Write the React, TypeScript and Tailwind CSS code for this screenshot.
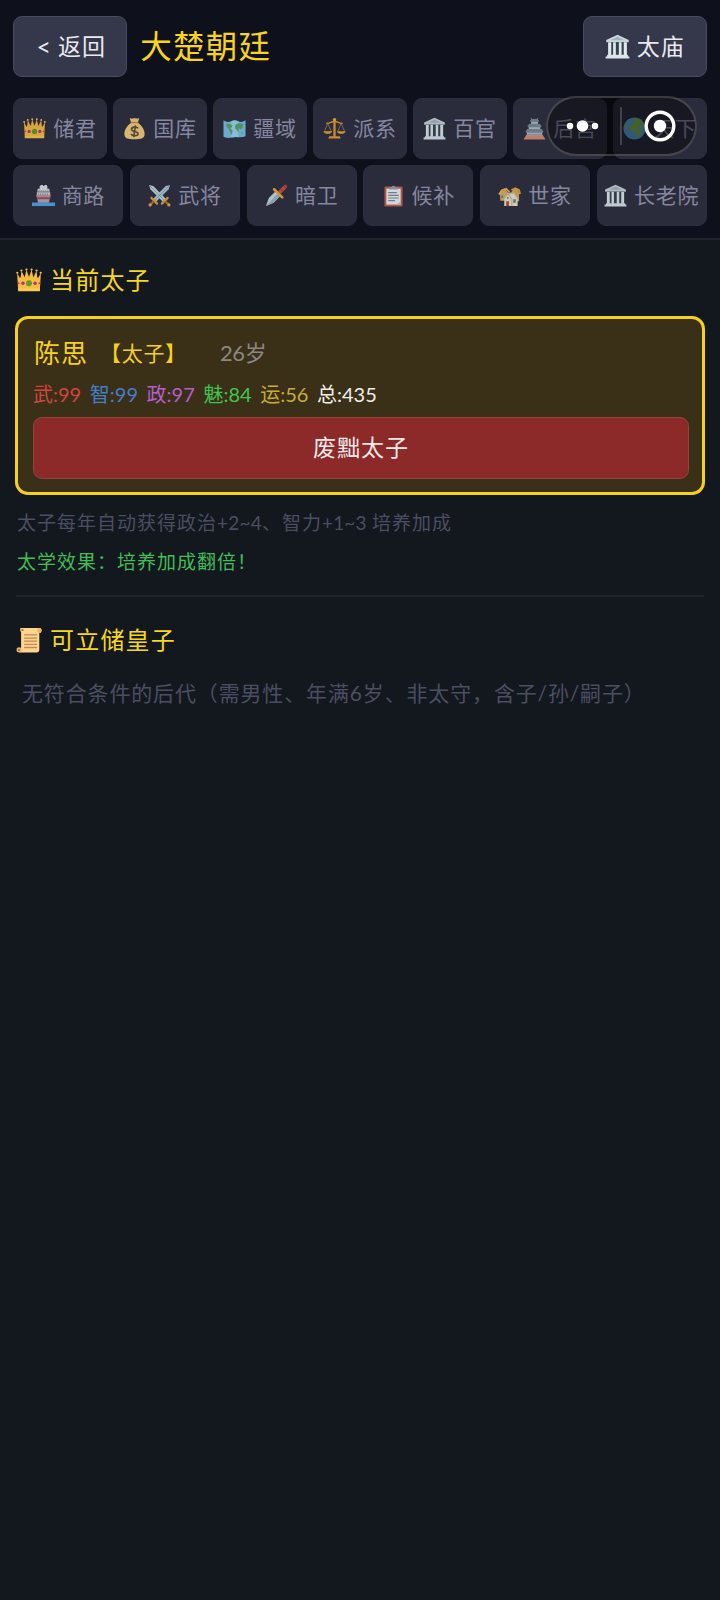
import type { ReactNode } from 'react';

type IconName =
    | 'crown' | 'money' | 'map' | 'scales' | 'temple' | 'castle' | 'globe'
    | 'ship' | 'swords' | 'dagger' | 'clipboard' | 'houses' | 'scroll';

const drawings: Record<IconName, ReactNode> = {
    crown: (
        <>
            <path d="M1 5.5 4.2 11 5 3.5 8 9.5 9.6 2.5 12 9 14.4 2.5 16 9.5 19 3.5 19.8 11 23 5.5 22 22H2Z" fill="#f8b83a" />
            <path d="M2 11.5 5 9l3 2.5L12 9l4 2.5L19 9l3 2.5V22H2Z" fill="#f8bc40" />
            <path d="M1.9 19.5h20.2L22 22.3H2Z" fill="#fbcb4d" />
            <g fill="#f9c84a">
                <circle cx="1.2" cy="5.3" r="1" />
                <circle cx="5" cy="3.2" r="1" />
                <circle cx="9.6" cy="2.3" r="1" />
                <circle cx="14.4" cy="2.3" r="1" />
                <circle cx="19" cy="3.2" r="1" />
                <circle cx="22.8" cy="5.3" r="1" />
            </g>
            <circle cx="12" cy="15" r="2.7" fill="#5f9a2d" />
            <circle cx="6.4" cy="15" r="1.6" fill="#b12f91" />
            <circle cx="17.6" cy="15" r="1.6" fill="#b12f91" />
            <circle cx="2.4" cy="15" r="1" fill="#d8473c" />
            <circle cx="21.6" cy="15" r="1" fill="#d8473c" />
        </>
    ),
    money: (
        <>
            <path d="M8.5 6C4 9 1 14 1.5 18.5c.4 3.9 3.6 4.7 10.5 4.7s10.100-.8 10.500-4.700C23 14 20 9 15.500 6Z" fill="#f6cf7c" />
            <path d="M7 1q2.500 1.200 5 0 2.500 1.200 5 0L15.500 6h-7Z" fill="#f6cf7c" />
            <path d="M8 5.800h8" stroke="#b98a3c" strokeWidth="1.300" />
            <path d="M15.800 11.800c-1-1.800-6.800-1.900-7 .9-.2 3.200 7 1.700 6.900 4.800-.1 2.800-6 2.700-7.400.2M13 8.800 11.200 21" stroke="#5d4b35" strokeWidth="1.700" fill="none" />
        </>
    ),
    map: (
        <>
            <path d="M.5 3.500Q4.500 6.500 8.500 4.500T16 4.500t7.500-1V20q-3.500 1.500-7.500 1t-7.500.5T.5 20.500Z" fill="#79c1ec" />
            <path d="M8.500 4.500Q12 3 16 4.500V21q-4-.5-7.500.5Z" fill="#9ad6f4" />
            <path d="M3 7.500 6.500 7 10 8.500 8.500 11.500 7.500 12l2.500 2-.8 5-1.700-3L6 12.500 4 10.500Z" fill="#5aa661" />
            <path d="M13 8 16 6.500 21.500 7 20.500 11.500 18.500 13 16.500 11.500 16 16l-2-2.500-1.500-2Z" fill="#5aa661" />
            <path d="M18.500 16.500 21 15.500V18Z" fill="#6db65e" />
        </>
    ),
    scales: (
        <>
            <path d="M10.800 3h2.400v17h-2.400zM6.500 20h11l1 2.500h-13z" fill="#e69d27" />
            <circle cx="12" cy="2.700" r="1.700" fill="#f0b23a" />
            <path d="M3.500 6.500C7 7.500 9 4 12 4.800 15 4 17 7.500 20.500 6.500" stroke="#e69d27" strokeWidth="1.600" fill="none" />
            <path d="M5 6.500 1.500 15M5 6.500 8.500 15M19 6.500 15.500 15M19 6.500 22.500 15" stroke="#a38b65" strokeWidth=".8" />
            <path d="M.5 14.800h9c-.6 3.700-8.400 3.700-9 0ZM14.500 14.800h9c-.6 3.700-8.400 3.700-9 0Z" fill="#eba72d" />
        </>
    ),
    temple: (
        <>
            <path d="M12 .8 22.800 5.800V8H1.200V5.800Z" fill="#c9d6dc" />
            <path d="M12 2.600 18.500 5.900h-13Z" fill="#9fb2bd" />
            <path d="M3 8h18v12.500H3z" fill="#31424c" />
            <path d="M3 8h3v12.500H3zM7.800 8h2.600v12.500H7.800zM13.300 8h2.600v12.500h-2.600zM18 8h3v12.500h-3z" fill="#dfe8ec" />
            <path d="M2 20h20v1.500H2zM.6 21.500h22.800v2H.6z" fill="#dce5ea" />
        </>
    ),
    castle: (
        <>
            <path d="M3.500 18.500h17l3 5H.5Z" fill="#d88a74" />
            <path d="M4 13h16v6H4zM6 7.500h12V13H6zM8.500 3h7v4.500h-7z" fill="#b4bfc4" />
            <path d="M2.500 15 5 12.500h14l2.500 2.500-1 1.500h-17ZM4.500 9.500 7.500 7h9l3 2.500-1 1.300h-13ZM7 4.200 9.500 2h5L17 4.200l-1 1.100H8ZM8 .5l2 1.500h4L16 .5l-.5 2.500h-7Z" fill="#768b96" />
            <path d="M4.500 18.200h15" stroke="#8b9ba3" strokeWidth="1" />
        </>
    ),
    globe: (
        <>
            <circle cx="12" cy="12" r="11.500" fill="#62b4f8" />
            <path d="M10 2.500 14 1 18.500 3 21.500 8 20 11.500 18.500 9.500 16 11 19.500 13 18.500 16.500 16 20.500 13.500 20 12.500 15 8 14 6.500 11 8.500 7.500 12 7Z" fill="#8cc957" />
            <path d="M2 8.500 4.500 6 5.500 8.500 3.500 11ZM20.500 15.500 22 14 21 17.500Z" fill="#8cc957" />
        </>
    ),
    ship: (
        <>
            <path d="M8 2h8v4H8z" fill="#e2e3e3" />
            <path d="M9 1h2.500v2H9zM13 1h2.500v2H13z" fill="#e6e6e6" />
            <path d="M6 5h12l.5 3H5.500ZM5 8.500h14V13H5z" fill="#dededc" />
            <path d="M6.500 7.500h11M6 10.500h12" stroke="#768893" strokeWidth="1.200" strokeDasharray="1.500 .8" />
            <path d="M4.500 12h15l-1.500 8H6Z" fill="#9b5260" />
            <path d="M4.500 11.800h15l-.5 1.900H5Z" fill="#c98d91" />
            <path d="M6 16h12l-.8 3.500H6.800Z" fill="#b3adb2" />
            <path d="M0 19.300h24V23H0Z" fill="#4aa6ed" />
        </>
    ),
    swords: (
        <>
            <path d="M1 1 5.500 2 18.500 15.500 15.500 18.500 2.500 5.500Z" fill="#c5dbe6" />
            <path d="M23 1 18.500 2 5.500 15.500 8.500 18.500 21.500 5.500Z" fill="#b3cbd8" />
            <path d="m1.500 1.500 15 15M22.500 1.500l-15 15" stroke="#7f9aa8" strokeWidth=".8" />
            <path d="M3.500 14.500 9.500 20.500M20.500 14.500 14.500 20.500" stroke="#e4a13a" strokeWidth="2.300" strokeLinecap="round" />
            <path d="M6 18 2.500 21.500M18 18 21.500 21.500" stroke="#b66a32" strokeWidth="2.500" />
            <circle cx="2.200" cy="21.800" r="1.700" fill="#eea93f" />
            <circle cx="21.800" cy="21.800" r="1.700" fill="#eea93f" />
        </>
    ),
    dagger: (
        <>
            <path d="M1 23 4 14.500 11 7.500 16 12.500 9 19.500Z" fill="#c9dbe4" />
            <path d="M1 23 13 10.500 16 12.500 9 19.500Z" fill="#9db4c2" />
            <path d="M15 9 21 2.800" stroke="#c95138" strokeWidth="3.800" />
            <path d="M9.500 5.500 18 14" stroke="#efa83c" strokeWidth="2.700" strokeLinecap="round" />
            <circle cx="21.300" cy="2.500" r="1.900" fill="#a94633" />
            <path d="m16.500 5.500 2.200 2.200" stroke="#8f3327" strokeWidth="1" />
        </>
    ),
    clipboard: (
        <>
            <rect x="2.500" y="2.500" width="19" height="21" rx="1.300" fill="#c85a49" />
            <path d="M4.500 4.800h15V21.500h-15z" fill="#f2f4f4" />
            <path d="M15.500 21.500 19.500 18v3.500Z" fill="#b5c4cb" />
            <path d="M7.500 5.800V3.500h2.300a2.300 2.300 0 0 1 4.400 0h2.300v2.300Z" fill="#91a4af" />
            <path d="M6.500 9h9M6.500 11.800h11M6.500 14.600h11M6.500 17.400h7" stroke="#778d9a" strokeWidth="1.200" />
        </>
    ),
    houses: (
        <>
            <path d="M2 10 4 7 8 6 11 10v7.500H2.500Z" fill="#d8b261" />
            <path d="M1 11 4 6.500 8.500 5 12 8.500" stroke="#efb24c" strokeWidth="2" fill="none" />
            <path d="M14 8 16.500 5.500 20 4.500 22 9v9h-7Z" fill="#d7ad55" />
            <path d="m14 6.500 4-2 4 2 1 4" stroke="#e3a33c" strokeWidth="2" fill="none" />
            <path d="M6.500 15 10.500 9.500 17 9l3.500 6v8h-14Z" fill="#efe5cc" />
            <path d="m6 15.500 4.500-6H17l4 5.500" stroke="#c6b893" strokeWidth="1.500" fill="none" />
            <path d="m10.500 10 4 6V23" stroke="#bfae88" strokeWidth="1" fill="none" />
            <path d="M8.500 18h3v5h-3z" fill="#b84f39" />
            <path d="M16 16h2.500v3.500H16zM9.500 13.500h1.500v2H9.500zM3.500 12h1.800v2.500H3.500z" fill="#5b7c8c" />
        </>
    ),
    scroll: (
        <>
            <path d="M4 1h17.500Q24 1 23.500 4 23 6 21.500 5.500V20.500Q21.500 23.500 19 23.500H3L4.700 20V4.500Q3.500 4 4 1Z" fill="#fbd789" />
            <path d="M20 1.200Q18.800 5.200 21.200 5.500 23.500 6 23.600 3.200 23.500 1 21.500 1Z" fill="#f1b862" />
            <path d="M.5 21.200a2.400 2.400 0 1 1 4.800 0V22Q5 23.500 3 23.500.5 23.500.5 21.200Z" fill="#eebc6b" />
            <circle cx="2.700" cy="21.200" r="1" fill="#825e3d" />
            <circle cx="6" cy="2.800" r="1" fill="#8f6944" />
            <path d="M7.500 7.300h12M7.500 10.200h12M7.500 13.100h12M7.500 16h12M7.500 18.900h12" stroke="#ce8461" strokeWidth="1.200" />
        </>
    ),
};

function Icon({ name, className }: { name: IconName; className: string }) {
    return (
        <svg viewBox="0 0 24 24" className={`shrink-0 ${className}`} fill="none" aria-hidden="true">
            {drawings[name]}
        </svg>
    );
}

type Tab = { icon: IconName; label: string };

const topTabs: Tab[] = [
    { icon: 'crown', label: '储君' },
    { icon: 'money', label: '国库' },
    { icon: 'map', label: '疆域' },
    { icon: 'scales', label: '派系' },
    { icon: 'temple', label: '百官' },
    { icon: 'castle', label: '后宫' },
    { icon: 'globe', label: '天下' },
];

const bottomTabs: Tab[] = [
    { icon: 'ship', label: '商路' },
    { icon: 'swords', label: '武将' },
    { icon: 'dagger', label: '暗卫' },
    { icon: 'clipboard', label: '候补' },
    { icon: 'houses', label: '世家' },
    { icon: 'temple', label: '长老院' },
];

const stats = [
    { text: '武:99', color: 'text-[#d2453f]' },
    { text: '智:99', color: 'text-[#427fc9]' },
    { text: '政:97', color: 'text-[#b45fc8]' },
    { text: '魅:84', color: 'text-[#3fc552]' },
    { text: '运:56', color: 'text-[#c9ad38]' },
    { text: '总:435', color: 'text-[#efeee9]' },
];

function TabButton({ icon, label }: Tab) {
    return (
        <button className="flex h-[61px] items-center justify-center gap-[7px] rounded-[9px] border border-[#2c2e3f] bg-[#2a2c3c] text-[21px] leading-none tracking-[0.7px] whitespace-nowrap text-[#85869f]">
            <Icon name={icon} className="size-[23px] opacity-85" />
            <span className="pb-[2px]">{label}</span>
        </button>
    );
}

function SectionTitle({ icon, children }: { icon: IconName; children: ReactNode }) {
    return (
        <h2 className="flex h-9 items-center gap-[7px] text-[24px] leading-9 tracking-[1.2px] text-[#f8d81c]">
            <Icon name={icon} className="size-[26px]" />
            <span className="-mt-px pl-px">{children}</span>
        </h2>
    );
}

// Mini-program menu that floats over the tab bar
function Capsule() {
    return (
        <div className="absolute top-[96px] left-[546px] flex h-[60px] w-[151px] items-center rounded-full border-2 border-white/20 bg-black/45">
            <svg viewBox="0 0 147 56" className="h-14 w-[147px]" fill="none">
                <circle cx="22" cy="28" r="3.2" fill="#fff" />
                <circle cx="34.5" cy="28" r="5.8" fill="#fff" />
                <circle cx="47" cy="28" r="3.2" fill="#fff" />
                <path d="M73 9v38" stroke="#fff" strokeOpacity=".25" strokeWidth="1.5" />
                <circle cx="112" cy="28" r="13.8" stroke="#fff" strokeWidth="3.4" />
                <circle cx="112" cy="28" r="6.2" fill="#fff" />
            </svg>
        </div>
    );
}

export default function App() {
    return (
        <div lang="zh-CN" className="relative h-[1600px] w-[720px] overflow-hidden bg-[#13171e] font-[Lato,'Noto_Sans_CJK_SC',sans-serif] font-normal">
            <header className="h-[240px] border-b-2 border-[#20222c] bg-[#0e111b] px-[13.3px] pt-4">
                <div className="flex h-[61px] items-center">
                    <button className="flex h-[61px] w-[114px] items-center justify-center rounded-[9px] border border-[#484a5f] bg-[#35374b] pl-[2px] text-[23px] leading-none tracking-[1px] text-[#e9e9f0]">
                        <span className="mr-[6px] text-[25px]">&lt;</span>
                        <span className="pb-px">返回</span>
                    </button>
                    <h1 className="ml-[13px] text-[31.5px] leading-[61px] tracking-[1.2px] text-[#f8d41c]">大楚朝廷</h1>
                    <button className="ml-auto flex h-[61px] w-[124px] items-center justify-center gap-[7px] rounded-[9px] border border-[#484a5f] bg-[#35374b] text-[23px] leading-none tracking-[1px] text-[#e9e9f0]">
                        <Icon name="temple" className="size-[25px]" />
                        <span className="pb-px">太庙</span>
                    </button>
                </div>
                <nav className="mt-[21px] grid gap-[6px]">
                    <div className="grid grid-cols-7 gap-[6.6px]">
                        {topTabs.map((tab) => (
                            <TabButton key={tab.label} {...tab} />
                        ))}
                    </div>
                    <div className="grid grid-cols-6 gap-[6.6px]">
                        {bottomTabs.map((tab) => (
                            <TabButton key={tab.label} {...tab} />
                        ))}
                    </div>
                </nav>
            </header>

            <main className="px-4 pt-[22px]">
                <SectionTitle icon="crown">当前太子</SectionTitle>

                <section className="-mx-px mt-[18px] h-[179px] rounded-[13px] border-3 border-[#f5d11e] bg-[#3a2f17] pr-[13px] pl-[15px] pt-[18px]">
                    <div className="flex h-8 items-center text-[#f5d11e]">
                        <span className="w-[67px] pl-px text-[26px] leading-8 tracking-[1px]">陈思</span>
                        <span className="w-[120px] text-[21px] leading-8 tracking-[0.7px]">【太子】</span>
                        <span className="text-[22px] leading-8 tracking-[-0.4px] text-[#8b8882]">26岁</span>
                    </div>
                    <div className="mt-[13px] flex h-6 text-[20px] leading-6">
                        {stats.map((stat) => (
                            <span key={stat.text} className={`w-[56.8px] whitespace-nowrap ${stat.color}`}>
                                {stat.text}
                            </span>
                        ))}
                    </div>
                    <button className="mt-[10.5px] flex h-[62px] w-full items-center justify-center rounded-[9px] border border-[#944540] bg-[#8c2929] pb-px text-[23px] leading-none tracking-[1px] text-[#f6e9e9]">
                        废黜太子
                    </button>
                </section>

                <p className="mt-[13px] pl-px text-[19px] leading-[30px] tracking-[1px] text-[#4b4e62]">
                    太子每年自动获得政治<span className="tracking-[0.2px]">+2~4</span>、智力<span className="tracking-[0.2px]">+1~3 </span>培养加成
                </p>
                <p className="mt-[9px] pl-px text-[19px] leading-[30px] tracking-[1px] text-[#40bd56]">
                    太学效果：培养加成翻倍！
                </p>
                <hr className="mt-[18px] border-t-2 border-[#20232c]" />

                <div className="mt-[25px]">
                    <SectionTitle icon="scroll">可立储皇子</SectionTitle>
                </div>
                <p className="mt-[19px] pl-[6px] text-[21px] leading-8 tracking-[0.85px] whitespace-nowrap text-[#4b4e62]">
                    无符合条件的后代（需男性、年满6岁、非太守，含子/孙/嗣子）
                </p>
            </main>

            <Capsule />
        </div>
    );
}
